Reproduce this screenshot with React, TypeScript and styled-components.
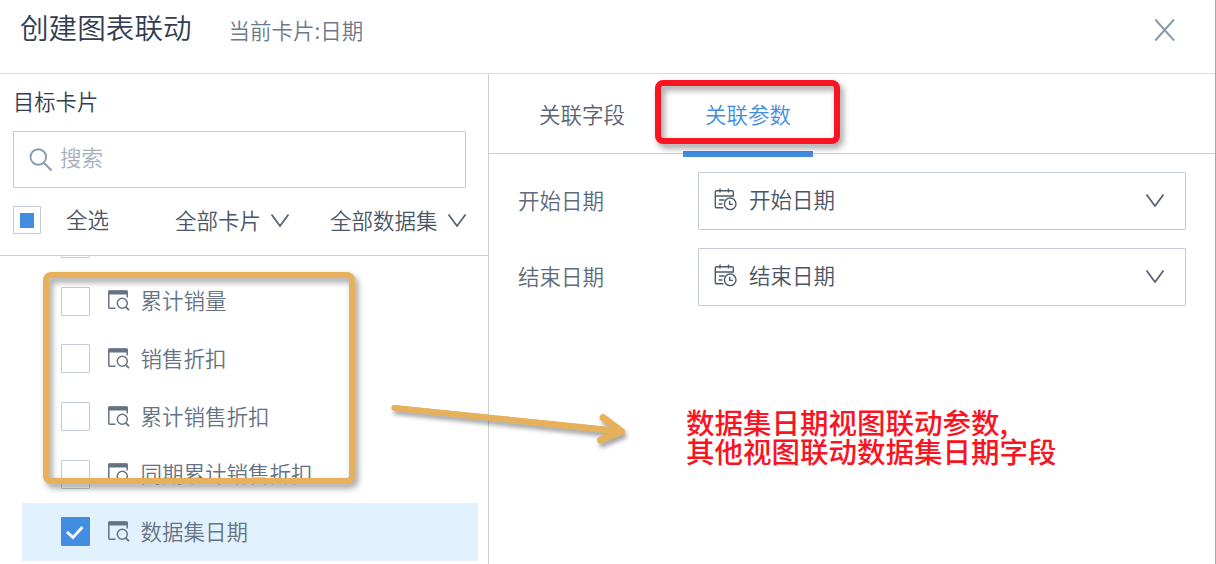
import React, { useState } from 'react';
import styled, { createGlobalStyle } from 'styled-components';

const GlobalStyle = createGlobalStyle`
  * {
    box-sizing: border-box;
  }
  body {
    margin: 0;
    overflow: hidden;
    background: #fff;
    font-family: 'Noto Sans CJK SC', sans-serif;
    font-weight: 350;
    font-size: 21.5px;
    line-height: 30px;
    color: #4b5568;
    white-space: nowrap;
  }
`;

const Dialog = styled.div`
  position: relative;
  display: flex;
  flex-direction: column;
  width: 1216px;
  height: 564px;
  overflow: hidden;
  background: #fff;
  border-right: 1px solid #a3a7aa;
`;

const Header = styled.header`
  display: flex;
  align-items: center;
  flex: none;
  height: 74px;
  padding: 0 39px 18px 20px;
  border-bottom: 1px solid #d9dce0;
`;

const Title = styled.h1`
  margin: -2px 0 0;
  font-size: 28.6px;
  font-weight: 350;
  line-height: 40px;
  color: #343d50;
`;

const Subtitle = styled.span`
  margin: 4px auto 0 37px;
  color: #6b7a8b;
`;

const CloseButton = styled.button`
  display: flex;
  margin-top: 4px;
  padding: 0;
  border: 0;
  background: none;
`;

const Body = styled.div`
  display: flex;
  flex: 1;
  min-height: 0;
`;

const Targets = styled.aside`
  display: flex;
  flex-direction: column;
  flex: none;
  width: 489px;
  border-right: 1px solid #ccd0d4;
`;

const TargetsTitle = styled.h2`
  margin: 12px 0 15px 13px;
  font-size: 21.3px;
  font-weight: 350;
  line-height: 30px;
  color: #343d50;
`;

const SearchBox = styled.label`
  display: flex;
  align-items: center;
  flex: none;
  width: 453px;
  height: 57px;
  margin-left: 13px;
  padding: 0 15px;
  gap: 7px;
  border: 1px solid #c3cad2;
  border-radius: 1px;
`;

const SearchInput = styled.input`
  flex: 1;
  min-width: 0;
  padding: 0 0 5px;
  border: 0;
  outline: 0;
  background: none;
  font: inherit;

  &::placeholder {
    color: #a5afbc;
    opacity: 1;
  }
`;

const Filters = styled.div`
  display: flex;
  align-items: center;
  flex: none;
  height: 68px;
  padding: 0 21px 3px 13px;
  border-bottom: 1px solid #ccd0d4;
`;

const SelectAll = styled.span`
  margin: -2px 0 0 25px;
`;

const Filter = styled.span<{ $left: number }>`
  display: flex;
  align-items: center;
  gap: 9px;
  margin-left: ${({ $left }) => $left}px;
`;

const List = styled.ul`
  flex: 1;
  min-height: 0;
  margin: 0;
  padding: 0 10px 0 22px;
  overflow: hidden;
  list-style: none;
`;

const Item = styled.li<{ $active?: boolean }>`
  display: flex;
  align-items: center;
  height: 57.6px;
  padding-left: 39px;
  background: ${({ $active }) => ($active ? '#e2f1fe' : 'transparent')};
  color: #657384;

  &:first-child {
    margin-top: -41px;
  }
`;

const ItemName = styled.span`
  margin: -2px 0 0 9.5px;
`;

const Checkbox = styled.span<{ $checked?: boolean; $size?: number }>`
  display: flex;
  align-items: center;
  justify-content: center;
  flex: none;
  width: ${({ $size = 29 }) => $size}px;
  height: ${({ $size = 29 }) => $size}px;
  border: 1px solid ${({ $checked }) => ($checked ? '#438de0' : '#c3cad2')};
  border-radius: 1px;
  background: ${({ $checked }) => ($checked ? '#438de0' : '#fff')};
`;

const Partial = styled.span`
  width: 14px;
  height: 15px;
  background: #438de0;
`;

const Settings = styled.main`
  flex: 1;
  min-width: 0;
`;

const Tabs = styled.nav`
  display: flex;
  height: 80px;
  padding-left: 28px;
  gap: 36px;
  border-bottom: 1px solid #ccd0d4;
`;

const Tab = styled.button<{ $active: boolean }>`
  width: 130px;
  height: 83px;
  padding: 3px 0 0;
  border: 0;
  border-bottom: 6px solid
    ${({ $active }) => ($active ? '#438de0' : 'transparent')};
  background: none;
  font: inherit;
  color: ${({ $active }) => ($active ? '#438de0' : '#5a6475')};
`;

const Fields = styled.div`
  display: flex;
  flex-direction: column;
  gap: 18.5px;
  padding: 18px 29px 0 29px;
`;

const Field = styled.div`
  display: flex;
  align-items: center;
  color: #5d6b7d;
`;

const FieldLabel = styled.span`
  width: 180px;
  padding-bottom: 2px;
`;

const Select = styled.div`
  display: flex;
  align-items: center;
  flex: 1;
  height: 57.5px;
  padding: 0 20px 2px 15px;
  border: 1px solid #c3cad2;
  border-radius: 1px;
  color: #4b5568;
`;

const SelectValue = styled.span`
  flex: 1;
  margin: -2px 0 0 11px;
`;

const Highlight = styled.div<{ $color: string }>`
  position: absolute;
  border: 6px solid ${({ $color }) => $color};
  border-radius: 8px;
  filter: drop-shadow(3px 4px 3px rgba(0, 0, 0, 0.4));
  pointer-events: none;
`;

const ListHighlight = styled(Highlight)`
  left: 43px;
  top: 272px;
  width: 312px;
  height: 212px;
`;

const TabHighlight = styled(Highlight)`
  left: 655px;
  top: 80px;
  width: 185px;
  height: 64px;
`;

const Arrow = styled.svg`
  position: absolute;
  left: 384px;
  top: 396px;
  filter: drop-shadow(2px 4px 2px rgba(0, 0, 0, 0.35));
`;

const Note = styled.p`
  position: absolute;
  left: 686px;
  top: 407px;
  margin: 0;
  font-size: 28.5px;
  font-weight: 500;
  line-height: 29px;
  color: #fa1321;
`;

const Chevron = () => (
  <svg width="20" height="14" viewBox="0 0 20 14" fill="none">
    <path d="M1.5 1.5L10 13L18.5 1.5" stroke="#596575" strokeWidth="1.8" />
  </svg>
);

const CardIcon = () => (
  <svg
    width="24"
    height="24"
    viewBox="0 0 24 24"
    fill="none"
    stroke="#657384"
    strokeWidth="1.5"
    style={{ marginLeft: 17 }}
  >
    <path d="M8.5 19.2H2.8Q1.8 19.2 1.8 18.2V3Q1.8 2 2.8 2H19.2Q20.2 2 20.2 3V8.5" />
    <path d="M1.5 1.5H20.5V5.5H1.5Z" fill="#657384" stroke="none" />
    <circle cx="15.3" cy="14.3" r="5" />
    <path d="M18.7 17.8L22 21.2" strokeWidth="1.8" />
  </svg>
);

const CalendarIcon = () => (
  <svg
    width="24"
    height="24"
    viewBox="0 0 24 24"
    fill="none"
    stroke="#4f5b6c"
    strokeWidth="1.4"
  >
    <path d="M9.5 19.8H2.8Q1.3 19.8 1.3 18.3V4Q1.3 2.8 2.5 2.8H18.2Q19.3 2.8 19.3 4V8.7M1.3 8H19.3M6 .5V4.5M14.5 .5V4.5" />
    <path d="M5 12H10.5M4.5 16H8.5" />
    <circle cx="16.2" cy="15.8" r="5.8" />
    <path d="M15.7 12.7V16.4H19" />
  </svg>
);

const cards = [
  '累计销量',
  '销售折扣',
  '累计销售折扣',
  '同期累计销售折扣',
  '数据集日期',
];
const tabs = ['关联字段', '关联参数'];
const params = ['开始日期', '结束日期'];

const App: React.FC = () => {
  const [tab, setTab] = useState('关联参数');
  const [selected, setSelected] = useState('数据集日期');

  return (
    <Dialog>
      <GlobalStyle />
      <Header>
        <Title>创建图表联动</Title>
        <Subtitle>当前卡片:日期</Subtitle>
        <CloseButton>
          <svg width="24" height="24" viewBox="0 0 24 24" fill="none">
            <path
              d="M3.3 1.5L22 22.5M22 1.5L3.3 22.5"
              stroke="#8b9bad"
              strokeWidth="2"
            />
          </svg>
        </CloseButton>
      </Header>
      <Body>
        <Targets>
          <TargetsTitle>目标卡片</TargetsTitle>
          <SearchBox>
            <svg width="24" height="24" viewBox="0 0 24 24" fill="none">
              <circle cx="9.3" cy="9" r="7.8" stroke="#8b9db0" strokeWidth="1.9" />
              <path d="M14.8 14.8L22.5 22.5" stroke="#8b9db0" strokeWidth="2.2" />
            </svg>
            <SearchInput placeholder="搜索" />
          </SearchBox>
          <Filters>
            <Checkbox $size={28}>
              <Partial />
            </Checkbox>
            <SelectAll>全选</SelectAll>
            <Filter $left={66}>
              全部卡片
              <Chevron />
            </Filter>
            <Filter $left={40}>
              全部数据集
              <Chevron />
            </Filter>
          </Filters>
          <List>
            {/* row scrolled almost out of view */}
            <Item>
              <Checkbox />
            </Item>
            {cards.map((name) => (
              <Item
                key={name}
                $active={name === selected}
                onClick={() => setSelected(name)}
              >
                <Checkbox $checked={name === selected}>
                  {name === selected && (
                    <svg width="20" height="16" viewBox="0 0 20 16" fill="none">
                      <path d="M1 8L7 13.5L16.5 3" stroke="#fff" strokeWidth="2.8" />
                    </svg>
                  )}
                </Checkbox>
                <CardIcon />
                <ItemName>{name}</ItemName>
              </Item>
            ))}
          </List>
        </Targets>
        <Settings>
          <Tabs>
            {tabs.map((name) => (
              <Tab key={name} $active={name === tab} onClick={() => setTab(name)}>
                {name}
              </Tab>
            ))}
          </Tabs>
          <Fields>
            {params.map((name) => (
              <Field key={name}>
                <FieldLabel>{name}</FieldLabel>
                <Select>
                  <CalendarIcon />
                  <SelectValue>{name}</SelectValue>
                  <Chevron />
                </Select>
              </Field>
            ))}
          </Fields>
        </Settings>
      </Body>
      <ListHighlight $color="#e7b05a" />
      <TabHighlight $color="#fa1321" />
      <Arrow width="252" height="56" viewBox="0 0 252 56" fill="none">
        <path d="M10 9L9.5 14.5L236 38.5V32Z" fill="#e7b05a" />
        <g stroke="#e7b05a" strokeLinecap="round" strokeLinejoin="round">
          <path d="M10 11.8L236 35" strokeWidth="5.5" />
          <path d="M219 21.5L237.5 35.5L216.5 44" strokeWidth="7" />
        </g>
      </Arrow>
      <Note>
        数据集日期视图联动参数,
        <br />
        其他视图联动数据集日期字段
      </Note>
    </Dialog>
  );
};

export default App;
